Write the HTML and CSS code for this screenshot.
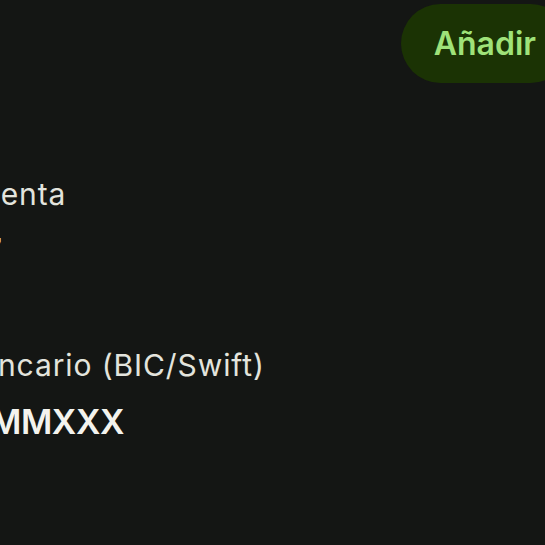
FILE: index.html
```html
<!DOCTYPE html>
<html lang="es">
<head>
    <meta charset="UTF-8">
    <meta name="viewport" content="width=device-width, initial-scale=1.0">
    <title>Cuenta bancaria</title>
    <link rel="stylesheet" href="styles.css">
</head>
<body>
    <div class="screen">
        <div class="top-bar">
            <button class="add-button">Añadir</button>
        </div>

        <div class="details">
            <div class="field">
                <div class="field-label">Nro. de cuenta</div>
                <div class="field-value">•••• 2857</div>
            </div>

            <div class="field">
                <div class="field-label">Código bancario (BIC/Swift)</div>
                <div class="field-value">CAHMESMMXXX</div>
            </div>
        </div>
    </div>
</body>
</html>
```

FILE: styles.css
```css
html, body {
    margin: 0;
    padding: 0;
    height: 100%;
}
body {
    background: #141614;
    color: #e3e4dd;
    font-family: 'Inter', 'Noto Sans', sans-serif;
    overflow: hidden;
}
.screen {
    display: flex;
    flex-direction: column;
    width: 545px;
}
.top-bar {
    display: flex;
    justify-content: flex-end;
    padding-top: 4px;
    margin-right: -25px;
}
.add-button {
    background: #1b3304;
    color: #9fe279;
    border: none;
    height: 79px;
    padding: 0 34px 0 33px;
    border-radius: 40px;
    font-family: inherit;
    font-size: 32px;
    font-weight: 600;
    cursor: pointer;
}
.details {
    display: flex;
    flex-direction: column;
    gap: 70px;
    margin-top: 91px;
    margin-left: -156px;
}
.field {
    display: flex;
    flex-direction: column;
    gap: 13px;
}
.field-label {
    font-size: 30px;
    line-height: 40px;
    letter-spacing: 0.9px;
    white-space: nowrap;
}
.field-value {
    font-size: 34px;
    font-weight: 600;
    line-height: 48px;
    letter-spacing: -0.4px;
    color: #f3f3ee;
    white-space: nowrap;
}
```
